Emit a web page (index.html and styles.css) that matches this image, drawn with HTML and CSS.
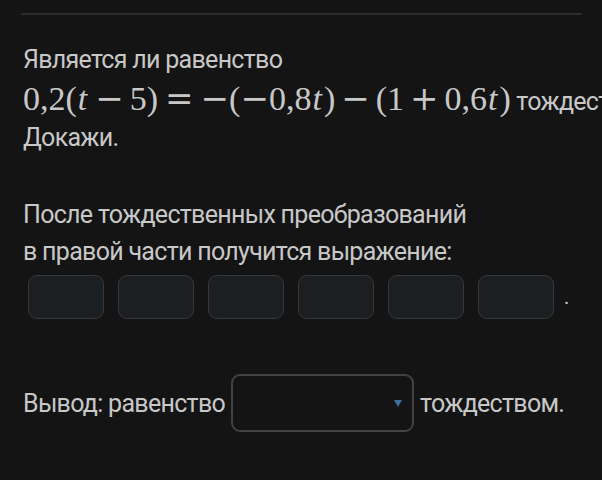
FILE: index.html
```html
<!DOCTYPE html>
<html>
<head>
    <meta charset="UTF-8">
    <title>Тождество</title>
    <link rel="stylesheet" href="styles.css">
</head>
<body>
    <div class="page">
        <div class="rule"></div>

        <div class="question">
            <div class="line">Является ли равенство</div>
            <div class="line nowrap">
                <span class="math">0,2(<i>t</i><span class="op">−</span>5)<span class="op rel">=</span><span class="un">−</span>(<span class="un">−</span>0,8<i>t</i>)<span class="op">−</span>(1<span class="op">+</span>0,6<i>t</i>)</span> тождеством?
            </div>
            <div class="line">Докажи.</div>
        </div>

        <div class="step">
            <div class="line">После тождественных преобразований</div>
            <div class="line">в правой части получится выражение:</div>
            <div class="slots">
                <div class="slot"></div>
                <div class="slot"></div>
                <div class="slot"></div>
                <div class="slot"></div>
                <div class="slot"></div>
                <div class="slot"></div>
                <span class="dot">.</span>
            </div>
        </div>

        <div class="conclusion">
            <span class="label">Вывод: равенство</span>
            <div class="select"><span class="arrow"></span></div>
            <span class="label">тождеством.</span>
        </div>
    </div>
</body>
</html>
```

FILE: styles.css
```css
html, body {
    margin: 0;
    padding: 0;
    background-color: #141414;
    overflow: hidden;
}
.page {
    font-family: 'Roboto', 'Noto Sans', sans-serif;
    font-size: 25px;
    letter-spacing: -0.7px;
    color: #c8c8c8;
    padding: 0 22px 0 23px;
    width: 602px;
    box-sizing: border-box;
}
.rule {
    height: 2px;
    background-color: #2c2c2c;
    margin: 13px -2px 0 -2px;
}
.line {
    line-height: 39px;
    height: 39px;
}
.nowrap {
    white-space: nowrap;
}
.question {
    margin-top: 25px;
}
.math {
    font-family: 'Liberation Serif', 'DejaVu Serif', serif;
    font-size: 34px;
    letter-spacing: 0;
}
.math i {
    padding: 0 2px 0 1px;
}
/* wider operator glyphs, closer to the TeX look */
.op, .un {
    font-family: 'DejaVu Serif', serif;
    font-weight: 300;
}
.op {
    padding: 0 6px;
}
.op.rel {
    padding: 0 7px;
}
.un {
    padding-right: 0;
}
.step {
    margin-top: 39px;
}
.step .line {
    line-height: 37px;
    height: 37px;
}
.slots {
    display: flex;
    align-items: center;
    gap: 14px;
    margin-top: 5px;
    padding-left: 5px;
}
.slot {
    width: 74px;
    height: 42px;
    background-color: #1c1f22;
    border: 1px solid #34383b;
    border-radius: 9px;
}
.dot {
    margin-left: -4px;
    font-size: 20px;
}
.conclusion {
    display: flex;
    align-items: center;
    gap: 6px;
    margin-top: 55px;
}
.label {
    white-space: nowrap;
    flex-shrink: 0;
}
.select {
    position: relative;
    flex-shrink: 0;
    width: 179px;
    height: 54px;
    border: 2px solid #424242;
    border-radius: 9px;
    background-color: #141414;
}
.arrow {
    position: absolute;
    right: 10px;
    top: 24px;
    width: 0;
    height: 0;
    border-left: 4px solid transparent;
    border-right: 4px solid transparent;
    border-top: 7px solid #3f6f9c;
}
```
